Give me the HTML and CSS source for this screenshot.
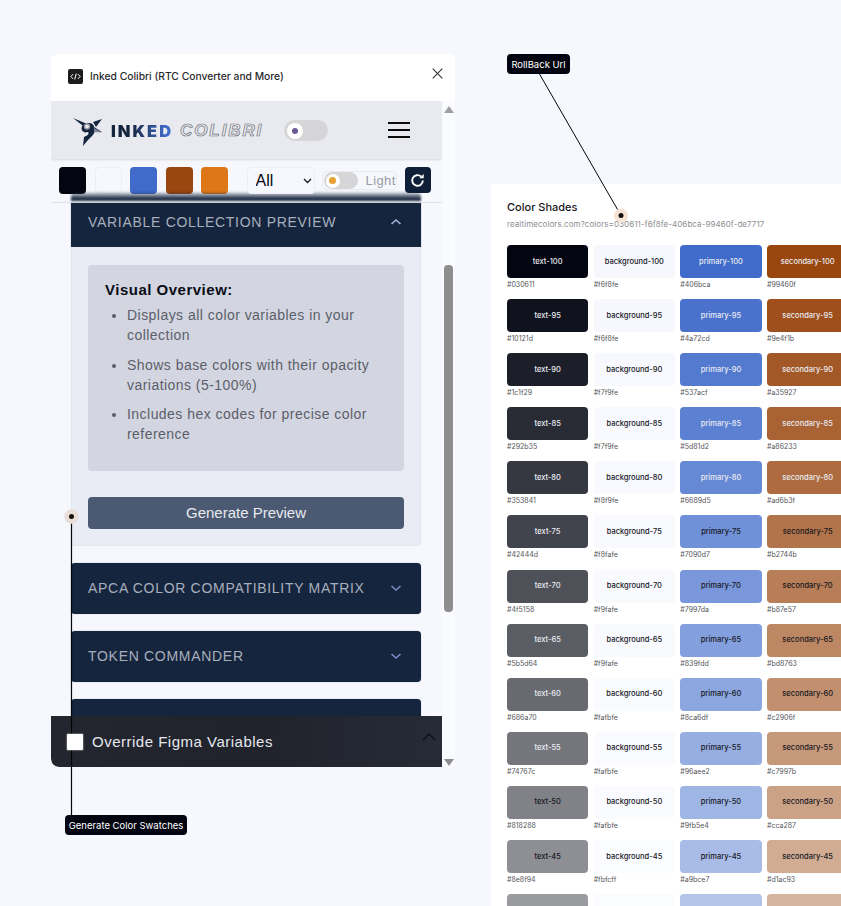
FILE: index.html
```html
<!DOCTYPE html>
<html lang="en">
<head>
<meta charset="utf-8">
<title>Inked Colibri</title>
<link rel="stylesheet" href="styles.css">
</head>
<body>
<section class="window">
  <header class="win-head">
    <span class="win-icon"><svg viewBox="0 0 15 15" width="15" height="15"><rect width="15" height="15" rx="2" fill="#1c1c1e"/><path d="M5 5.2 2.9 7.5 5 9.8M10 5.2l2.1 2.3L10 9.8M8.3 4.6 6.7 10.4" fill="none" stroke="#fff" stroke-width="1"/></svg></span>
    <span class="win-title">Inked Colibri (RTC Converter and More)</span>
    <svg class="win-close" viewBox="0 0 11 11" width="11" height="11"><path d="M.7.7l9.6 9.6M10.3.7.7 10.3" stroke="#333" stroke-width="1.1" fill="none"/></svg>
  </header>
  <div class="win-body">
    <div class="app">
      <nav class="nav">
        <svg class="logo" viewBox="0 0 30 30" width="30" height="30"><path d="M1 2 14 7.5 17 7c3 0 5 2 5 4l8 5-7-1c-1 4-5 7-7 9l-5 6 1-9 3-1.500c1.500-1 2-2.500 1-3.500l-3 .5C9 15 9 12 10.500 9.500Z" fill="#16253e"/><path d="M21 6 30 3 24 11Z" fill="#16253e"/><path d="M22 12l8 4.500-8-.5Z" fill="#7d8696"/><circle cx="15" cy="10.500" r="2.600" fill="#e8eaf0" stroke="#8a8f9a" stroke-width="1.300"/></svg>
        <span class="brand-a">INKED</span>
        <span class="brand-b">COLIBRI</span>
        <span class="nav-toggle"><span class="knob"><i class="dot-purple"></i></span></span>
        <span class="burger"><i></i><i></i><i></i></span>
      </nav>
      <div class="toolbar">
        <span class="swatch c1"></span>
        <span class="swatch c2"></span>
        <span class="swatch c3"></span>
        <span class="swatch c4"></span>
        <span class="swatch c5"></span>
        <span class="filter-wrap">
          <select class="filter"><option>All</option></select>
          <svg class="filter-arrow" viewBox="0 0 9 6" width="9" height="6"><path d="M1 1l3.500 3.500L8 1" fill="none" stroke="#1a1a1a" stroke-width="1.300"/></svg>
        </span>
        <span class="light">
          <span class="light-pill"><span class="knob small"><i class="dot-orange"></i></span></span>
          <span class="light-text">Light</span>
        </span>
        <button class="refresh" type="button"><svg viewBox="0 0 16 16" width="17" height="17"><path d="M13 8a5 5 0 1 1-1.600-3.700" fill="none" stroke="#fff" stroke-width="1.800"/><path d="M13.800 1.800v4.100H9.700Z" fill="#fff"/></svg></button>
      </div>
      <div class="scroll">
        <article class="acc open">
          <div class="acc-head">
            <span>VARIABLE COLLECTION PREVIEW</span>
            <svg class="chev" viewBox="0 0 12 8" width="12" height="8"><path d="M1.500 6 6 2l4.500 4" fill="none" stroke="#a9b4dc" stroke-width="1.600"/></svg>
          </div>
          <div class="acc-panel">
            <div class="overview">
              <h3>Visual Overview:</h3>
              <ul>
                <li>Displays all color variables in your collection</li>
                <li>Shows base colors with their opacity variations (5-100%)</li>
                <li>Includes hex codes for precise color reference</li>
              </ul>
            </div>
            <button class="generate" type="button">Generate Preview</button>
          </div>
        </article>
        <article class="acc">
          <div class="acc-head">
            <span>APCA COLOR COMPATIBILITY MATRIX</span>
            <svg class="chev" viewBox="0 0 12 8" width="12" height="8"><path d="M1.500 2 6 6l4.500-4" fill="none" stroke="#7c8cc4" stroke-width="1.600"/></svg>
          </div>
        </article>
        <article class="acc">
          <div class="acc-head">
            <span>TOKEN COMMANDER</span>
            <svg class="chev" viewBox="0 0 12 8" width="12" height="8"><path d="M1.500 2 6 6l4.500-4" fill="none" stroke="#7c8cc4" stroke-width="1.600"/></svg>
          </div>
        </article>
        <article class="acc"><div class="acc-head"></div></article>
      </div>
      <footer class="override">
        <span class="check"></span>
        <span class="override-label">Override Figma Variables</span>
        <svg class="override-chev" viewBox="0 0 14 8" width="14" height="8"><path d="M1 7l6-6 6 6" fill="none" stroke="#0d0f14" stroke-width="1.300"/></svg>
      </footer>
    </div>
    <aside class="scrollbar">
      <span class="arrow up"></span>
      <span class="thumb"></span>
      <span class="arrow down"></span>
    </aside>
  </div>
</section>

<section class="card">
  <h2>Color Shades</h2>
  <p class="url">realtimecolors.com?colors=030611-f6f8fe-406bca-99460f-de7717</p>
  <div class="grid">
    <div class="shade"><div class="chip lt" style="background:#030611">text-100</div><span>#030611</span></div>
    <div class="shade"><div class="chip" style="background:#f6f8fe">background-100</div><span>#f6f8fe</span></div>
    <div class="shade"><div class="chip lt" style="background:#406bca">primary-100</div><span>#406bca</span></div>
    <div class="shade"><div class="chip lt" style="background:#99460f">secondary-100</div><span>#99460f</span></div>

    <div class="shade"><div class="chip lt" style="background:#10121d">text-95</div><span>#10121d</span></div>
    <div class="shade"><div class="chip" style="background:#f6f8fe">background-95</div><span>#f6f8fe</span></div>
    <div class="shade"><div class="chip lt" style="background:#4a72cd">primary-95</div><span>#4a72cd</span></div>
    <div class="shade"><div class="chip lt" style="background:#9e4f1b">secondary-95</div><span>#9e4f1b</span></div>

    <div class="shade"><div class="chip lt" style="background:#1c1f29">text-90</div><span>#1c1f29</span></div>
    <div class="shade"><div class="chip" style="background:#f7f9fe">background-90</div><span>#f7f9fe</span></div>
    <div class="shade"><div class="chip lt" style="background:#537acf">primary-90</div><span>#537acf</span></div>
    <div class="shade"><div class="chip lt" style="background:#a35927">secondary-90</div><span>#a35927</span></div>

    <div class="shade"><div class="chip lt" style="background:#292b35">text-85</div><span>#292b35</span></div>
    <div class="shade"><div class="chip" style="background:#f7f9fe">background-85</div><span>#f7f9fe</span></div>
    <div class="shade"><div class="chip lt" style="background:#5d81d2">primary-85</div><span>#5d81d2</span></div>
    <div class="shade"><div class="chip lt" style="background:#a86233">secondary-85</div><span>#a86233</span></div>

    <div class="shade"><div class="chip lt" style="background:#353841">text-80</div><span>#353841</span></div>
    <div class="shade"><div class="chip" style="background:#f8f9fe">background-80</div><span>#f8f9fe</span></div>
    <div class="shade"><div class="chip lt" style="background:#6689d5">primary-80</div><span>#6689d5</span></div>
    <div class="shade"><div class="chip lt" style="background:#ad6b3f">secondary-80</div><span>#ad6b3f</span></div>

    <div class="shade"><div class="chip lt" style="background:#42444d">text-75</div><span>#42444d</span></div>
    <div class="shade"><div class="chip" style="background:#f8fafe">background-75</div><span>#f8fafe</span></div>
    <div class="shade"><div class="chip" style="background:#7090d7">primary-75</div><span>#7090d7</span></div>
    <div class="shade"><div class="chip" style="background:#b2744b">secondary-75</div><span>#b2744b</span></div>

    <div class="shade"><div class="chip lt" style="background:#4f5158">text-70</div><span>#4f5158</span></div>
    <div class="shade"><div class="chip" style="background:#f9fafe">background-70</div><span>#f9fafe</span></div>
    <div class="shade"><div class="chip" style="background:#7997da">primary-70</div><span>#7997da</span></div>
    <div class="shade"><div class="chip" style="background:#b87e57">secondary-70</div><span>#b87e57</span></div>

    <div class="shade"><div class="chip lt" style="background:#5b5d64">text-65</div><span>#5b5d64</span></div>
    <div class="shade"><div class="chip" style="background:#f9fafe">background-65</div><span>#f9fafe</span></div>
    <div class="shade"><div class="chip" style="background:#839fdd">primary-65</div><span>#839fdd</span></div>
    <div class="shade"><div class="chip" style="background:#bd8763">secondary-65</div><span>#bd8763</span></div>

    <div class="shade"><div class="chip lt" style="background:#686a70">text-60</div><span>#686a70</span></div>
    <div class="shade"><div class="chip" style="background:#fafbfe">background-60</div><span>#fafbfe</span></div>
    <div class="shade"><div class="chip" style="background:#8ca6df">primary-60</div><span>#8ca6df</span></div>
    <div class="shade"><div class="chip" style="background:#c2906f">secondary-60</div><span>#c2906f</span></div>

    <div class="shade"><div class="chip lt" style="background:#74767c">text-55</div><span>#74767c</span></div>
    <div class="shade"><div class="chip" style="background:#fafbfe">background-55</div><span>#fafbfe</span></div>
    <div class="shade"><div class="chip" style="background:#96aee2">primary-55</div><span>#96aee2</span></div>
    <div class="shade"><div class="chip" style="background:#c7997b">secondary-55</div><span>#c7997b</span></div>

    <div class="shade"><div class="chip" style="background:#818288">text-50</div><span>#818288</span></div>
    <div class="shade"><div class="chip" style="background:#fafbfe">background-50</div><span>#fafbfe</span></div>
    <div class="shade"><div class="chip" style="background:#9fb5e4">primary-50</div><span>#9fb5e4</span></div>
    <div class="shade"><div class="chip" style="background:#cca287">secondary-50</div><span>#cca287</span></div>

    <div class="shade"><div class="chip" style="background:#8e8f94">text-45</div><span>#8e8f94</span></div>
    <div class="shade"><div class="chip" style="background:#fbfcff">background-45</div><span>#fbfcff</span></div>
    <div class="shade"><div class="chip" style="background:#a9bce7">primary-45</div><span>#a9bce7</span></div>
    <div class="shade"><div class="chip" style="background:#d1ac93">secondary-45</div><span>#d1ac93</span></div>

    <div class="shade"><div class="chip" style="background:#9a9b9f"></div></div>
    <div class="shade"><div class="chip" style="background:#fbfcff"></div></div>
    <div class="shade"><div class="chip" style="background:#b3c4e9"></div></div>
    <div class="shade"><div class="chip" style="background:#d6b59f"></div></div>
  </div>
</section>

<svg class="overlay" viewBox="0 0 841 906" width="841" height="906">
  <path d="M71.500 516V816" stroke="#050505" stroke-width="1.200" fill="none"/>
  <circle cx="71.500" cy="516.500" r="7" fill="#eadfd6" stroke="#dcdce2" stroke-width=".6"/>
  <circle cx="71.500" cy="516.500" r="2.500" fill="#15100d"/>
  <path d="M539.500 74 621 215.500" stroke="#050505" stroke-width="1" fill="none"/>
  <circle cx="621" cy="215.500" r="7" fill="#f6e3d6"/>
  <circle cx="621" cy="215.500" r="2.500" fill="#15100d"/>
</svg>
<span class="callout call-a">RollBack Url</span>
<span class="callout call-b">Generate Color Swatches</span>
</body>
</html>
```

FILE: styles.css
```css
* { box-sizing: border-box; }
html, body { margin: 0; height: 906px; overflow: hidden; }
body { position: relative; background: #f6f8fe; font-family: "Liberation Sans", Arial, sans-serif; }

.window { position: absolute; left: 51px; top: 54px; width: 404px; height: 713px; display: flex; flex-direction: column; background: #fff; border-radius: 8px 4px 0 8px; overflow: hidden; }
.win-head { height: 47px; flex: none; display: flex; align-items: center; padding: 0 12px 3px 17px; background: #fff; }
.win-icon { display: flex; margin-right: 7px; }
.win-title { font: 500 10.300px "Inter", sans-serif; color: #2a2a2e; flex: 1; }
.win-close { margin-bottom: 6px; }
.win-body { flex: 1; display: flex; min-height: 0; }

.app { position: relative; width: 391px; flex: none; display: flex; flex-direction: column; background: #f6f8fe; overflow: hidden; }
.nav { height: 58px; flex: none; display: flex; align-items: center; padding: 0 32px 0 21px; background: #e8eaf0; box-shadow: 0 1px 2px rgba(0, 0, 0, .12); position: relative; z-index: 1; }
.logo { flex: none; margin-right: 9px; margin-top: 2px; }
.brand-a { font: 900 16.500px "Inter", sans-serif; letter-spacing: 2px; background: linear-gradient(90deg, #16253e 30%, #406bca 90%); -webkit-background-clip: text; background-clip: text; color: transparent; margin-top: 1px; }
.brand-b { font: italic 700 17px "Liberation Sans", sans-serif; letter-spacing: 1.900px; color: #e8eaf0; -webkit-text-stroke: .7px #6f7178; margin-left: 7px; margin-top: 1px; }
.nav-toggle { width: 44px; height: 21px; margin-left: 21px; margin-top: 1px; border-radius: 11px; background: #d6d6d8; display: flex; align-items: center; padding-left: 3px; }
.knob { width: 16px; height: 16px; border-radius: 50%; background: #fff; display: flex; align-items: center; justify-content: center; }
.dot-purple { width: 6px; height: 6px; border-radius: 50%; background: #6a5a94; }
.burger { width: 22px; height: 16px; margin-left: auto; margin-top: -1px; display: flex; flex-direction: column; justify-content: space-between; }
.burger i { display: block; height: 2px; background: #0b0b0b; }

.toolbar { position: relative; height: 44px; flex: none; display: flex; align-items: flex-start; padding: 8px 0 0 8px; border-bottom: 1px solid #dfe1e6; }
.toolbar::after { content: ""; position: absolute; left: 20px; width: 350px; bottom: 1px; height: 9px; border-radius: 5px 5px 0 0; background: linear-gradient(rgba(28, 42, 66, .1), #1c2a42 75%); filter: blur(1.200px); }
.swatch { width: 27px; height: 27px; margin-right: 8.500px; border-radius: 4px; flex: none; }
.c1 { background: #030611; }
.c2 { background: #f6f8fe; border: 1px solid #eceef4; }
.c3 { background: #406bca; }
.c4 { background: #99460f; }
.c5 { background: #de7717; }
.filter-wrap { position: relative; z-index: 2; display: block; width: 68px; height: 27px; margin-left: 10px; flex: none; }
.filter { display: block; width: 68px; height: 27px; padding-left: 8px; appearance: none; -webkit-appearance: none; border: 1px solid #eceef4; border-radius: 4px; background: #f6f8fe; font: 16px "Liberation Sans", sans-serif; color: #030611; }
.filter-arrow { position: absolute; right: 3px; top: 11px; pointer-events: none; }
.light { width: 75px; height: 19px; margin: 4px 0 0 7px; padding-left: 1px; display: flex; align-items: center; border: 1px solid #e9ebf1; border-radius: 5px; flex: none; }
.light-pill { width: 34px; height: 17px; border-radius: 9px; background: #d6d6d8; display: flex; align-items: center; padding-left: 2px; flex: none; }
.knob.small { width: 14px; height: 14px; }
.dot-orange { width: 7px; height: 7px; border-radius: 50%; background: #e9a032; }
.light-text { margin-left: 8px; font-size: 13px; letter-spacing: .4px; color: #9a9ca3; white-space: nowrap; }
.refresh { width: 26px; height: 26px; margin-left: 8px; padding: 0; border: 0; border-radius: 4px; background: #0f1f38; display: flex; align-items: center; justify-content: center; position: relative; z-index: 2; flex: none; }

.scroll { flex: 1; min-height: 0; padding: 0 21px 0 20px; display: flex; flex-direction: column; gap: 17px; overflow: hidden; }
.acc { flex: none; }
.acc-head { height: 51px; padding: 0 19px 2px 17px; border-radius: 4px; background: #16253e; display: flex; align-items: center; justify-content: space-between; font-size: 14px; letter-spacing: .7px; color: #a8afbc; box-shadow: 0 0 1px rgba(22, 37, 62, .5); }
.acc.open .acc-head { height: 44px; border-radius: 0; padding-bottom: 6px; }
.acc-panel { padding: 18px 16px 17px; height: 299px; background: #e9ecf4; border: 1px solid #e4e6ee; border-top: 0; border-radius: 0 0 4px 4px; }
.overview { height: 206px; padding: 15px 17px; border-radius: 4px; background: #d3d6e1; }
.overview h3 { margin: 0 0 5px; font-size: 15px; line-height: 20px; letter-spacing: .5px; color: #0a0d16; }
.overview ul { margin: 0; padding-left: 22px; font-size: 14px; line-height: 20px; letter-spacing: .46px; color: #5b5e69; }
.overview li { margin-bottom: 9.500px; }
.generate { display: block; width: 100%; height: 32px; margin-top: 26px; padding: 0 0 2px; border: 0; border-radius: 4px; background: #4b5a72; font: 15px "Liberation Sans", sans-serif; color: #e8eaf0; }

.override { position: absolute; left: 0; right: 0; bottom: 0; height: 51px; display: flex; align-items: center; padding: 0 6px 0 16px; border-radius: 0 0 0 8px; background: linear-gradient(90deg, #23262f, #20232c 55%, #272b36); color: #e6e8ed; }
.check { position: relative; z-index: 2; width: 16px; height: 16px; background: #fff; border-radius: 1px; box-shadow: 0 0 1px 1px rgba(255, 255, 255, .25); flex: none; }
.override-label { margin-left: 9px; font-size: 15px; letter-spacing: .5px; flex: 1; }
.override-chev { margin-bottom: 9px; }

.scrollbar { position: relative; flex: 1; background: #fafbfe; }
.thumb { position: absolute; left: 2px; top: 164px; width: 9px; height: 347px; border-radius: 4px; background: #8e8e8e; }
.arrow { position: absolute; left: 2px; width: 0; height: 0; border-left: 5px solid transparent; border-right: 5px solid transparent; }
.arrow.up { top: 5px; border-bottom: 7px solid #a0a0a0; }
.arrow.down { bottom: 1px; border-top: 7px solid #8e8e8e; }

.card { position: absolute; left: 491px; top: 184px; width: 350px; height: 722px; padding: 16px; background: #fff; border-radius: 4px 0 0 0; font-family: "Inter", sans-serif; overflow: hidden; }
.card h2 { margin: 0; font-size: 11px; font-weight: 500; line-height: 14px; color: #17181c; }
.url { margin: 4px 0 15px; font-size: 8px; line-height: 12px; letter-spacing: .07px; color: #8d8e92; white-space: nowrap; }
.grid { display: grid; grid-template-columns: repeat(4, 81.330px); column-gap: 5.330px; row-gap: 7px; }
.shade { height: 47.100px; font-size: 7px; line-height: 12px; color: #55565b; }
.shade span { display: block; margin-top: 1px; }
.chip { height: 33px; margin-bottom: 1px; border-radius: 4px; display: flex; align-items: center; justify-content: center; font-size: 7.500px; font-weight: 500; color: #17181f; }
.chip.lt { color: #e9ebf2; }

.overlay { position: absolute; left: 0; top: 0; pointer-events: none; }
.callout { position: absolute; height: 20px; display: flex; align-items: center; justify-content: center; border-radius: 4px; background: #030611; font: 400 9.500px "Inter", sans-serif; color: #fff; white-space: nowrap; }
.call-a { left: 507px; top: 54px; width: 63px; }
.call-b { left: 65px; top: 815px; width: 122px; }
```
